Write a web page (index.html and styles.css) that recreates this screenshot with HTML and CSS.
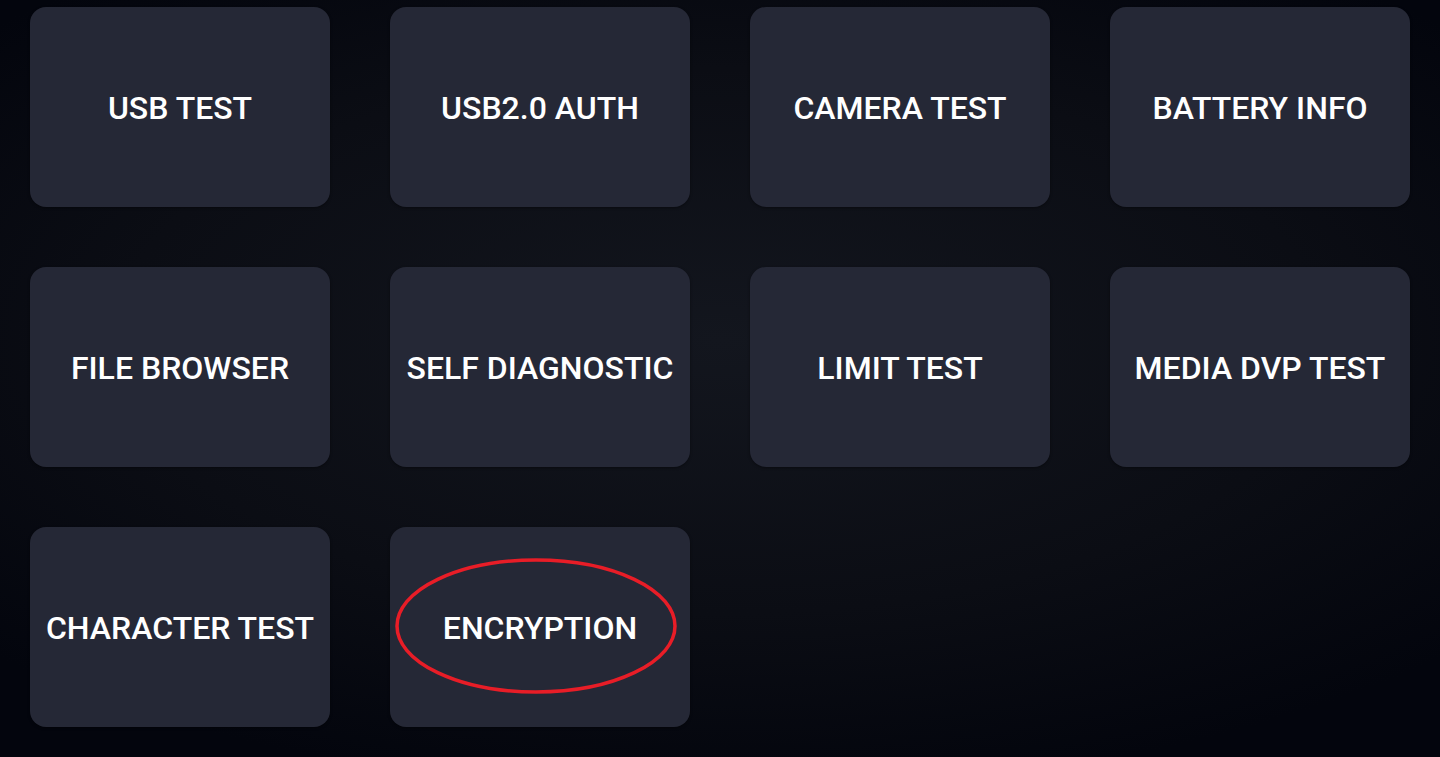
FILE: index.html
```html
<!DOCTYPE html>
<html>
	<head>
		<meta charset="utf-8">
		<title>Factory Test</title>
		<link rel="stylesheet" href="styles.css">
	</head>
	<body>
		<div class="grid">
			<div class="tile">USB TEST</div>
			<div class="tile">USB2.0 AUTH</div>
			<div class="tile">CAMERA TEST</div>
			<div class="tile">BATTERY INFO</div>
			<div class="tile">FILE BROWSER</div>
			<div class="tile">SELF DIAGNOSTIC</div>
			<div class="tile">LIMIT TEST</div>
			<div class="tile">MEDIA DVP TEST</div>
			<div class="tile">CHARACTER TEST</div>
			<div class="tile marked">
				ENCRYPTION
				<svg class="ring" width="284" height="138" viewBox="0 0 284 138">
					<ellipse cx="142" cy="69" rx="139" ry="66" fill="none" stroke="#e81d27" stroke-width="3.5"/>
				</svg>
			</div>
		</div>
	</body>
</html>
```

FILE: styles.css
```css
*{
	margin: 0px;
	padding: 0px;
	box-sizing: border-box;
}
html, body{
	height: 100%;
}
body{
	background: radial-gradient(ellipse 70% 60% at 50% 45%, #13161e 0%, #0b0d14 60%, #03050d 100%);
	background-color: #05070e;
	font-family: Roboto, "Liberation Sans", sans-serif;
	overflow: hidden;
}
.grid{
	display: grid;
	grid-template-columns: repeat(4, 300px);
	grid-auto-rows: 200px;
	gap: 60px;
	padding: 7px 30px 0 30px;
}
.tile{
	position: relative;
	display: flex;
	align-items: center;
	justify-content: center;
	background: #252836;
	border-radius: 16px;
	color: #ffffff;
	font-size: 32px;
	font-weight: 500;
	padding-top: 2px;
	white-space: nowrap;
	box-shadow: 0 1px 3px rgba(0,0,0,0.4);
}
.tile .ring{
	position: absolute;
	left: 4px;
	top: 30px;
}
```
